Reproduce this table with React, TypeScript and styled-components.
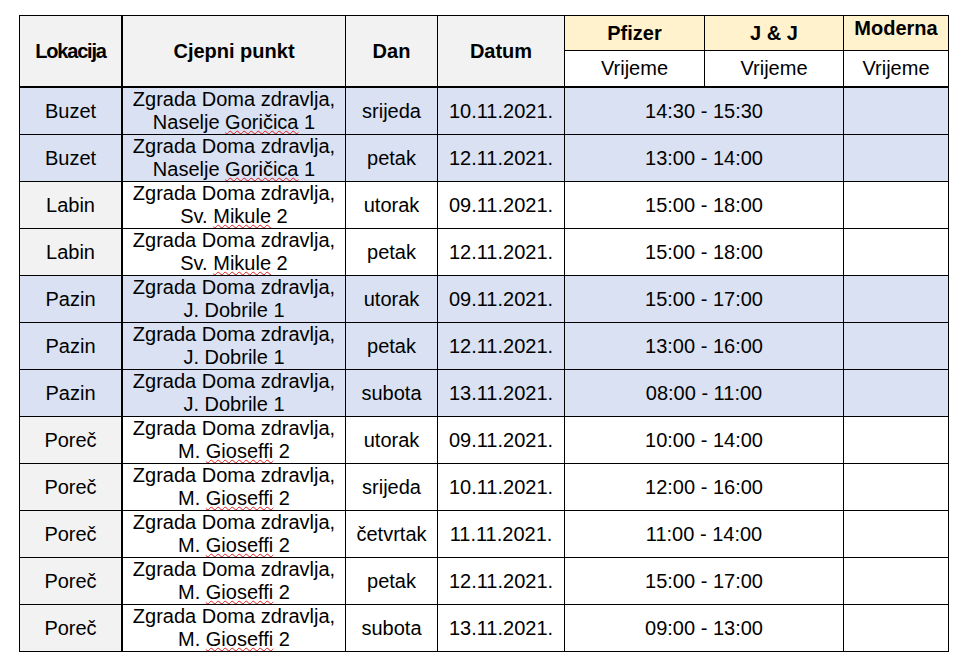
import React from "react";
import styled, { createGlobalStyle } from "styled-components";

const GlobalStyle = createGlobalStyle`
  html, body {
    margin: 0;
    padding: 0;
    background: #ffffff;
  }
  body {
    font-family: "Liberation Sans", Arial, sans-serif;
    color: #000;
  }
`;

const Page = styled.div`
  padding: 15px 0 0 19px;
`;

const Grid = styled.div`
  display: grid;
  grid-template-columns: 103px 223px 92px 127px 140px 139px 105px;
  grid-template-rows: 35px 37px repeat(12, 47px);
  width: max-content;
  border-top: 1px solid #000;
  border-left: 1px solid #000;
`;

type CellProps = {
  $bg?: string;
  $bold?: boolean;
  $thickRight?: boolean;
  $thickBottom?: boolean;
  $rowSpan?: number;
  $colSpan?: number;
  $valign?: "center" | "flex-start";
};

const Cell = styled.div<CellProps>`
  display: flex;
  align-items: ${(p) => p.$valign ?? "center"};
  justify-content: center;
  text-align: center;
  box-sizing: border-box;
  background: ${(p) => p.$bg ?? "#ffffff"};
  border-right: ${(p) => (p.$thickRight ? "2px" : "1px")} solid #000;
  border-bottom: ${(p) => (p.$thickBottom ? "2px" : "1px")} solid #000;
  grid-row: span ${(p) => p.$rowSpan ?? 1};
  grid-column: span ${(p) => p.$colSpan ?? 1};
  font-size: 20px;
  line-height: 23px;
  font-weight: ${(p) => (p.$bold ? 700 : 400)};
  overflow: hidden;
  white-space: nowrap;
`;

const Tight = styled.span`
  letter-spacing: -1.2px;
`;

const Raised = styled.span`
  margin-top: 1px;
`;

const Lines = styled.div`
  display: flex;
  flex-direction: column;
  align-items: center;
`;

const Misspelled = styled.span`
  text-decoration: underline wavy #e01b1b;
  text-decoration-thickness: 1px;
  text-underline-offset: 1px;
`;

const GRAY = "#f2f2f2";
const YELLOW = "#fff2cc";
const BLUE = "#d9e1f2";

type Row = {
  loc: string;
  street: string;
  flagged: string;
  rest: string;
  day: string;
  date: string;
  time: string;
  blue: boolean;
};

const buzet = { loc: "Buzet", street: "Naselje ", flagged: "Goričica", rest: " 1" };
const labin = { loc: "Labin", street: "Sv. ", flagged: "Mikule", rest: " 2" };
const pazin = { loc: "Pazin", street: "J. Dobrile 1", flagged: "", rest: "" };
const porec = { loc: "Poreč", street: "M. ", flagged: "Gioseffi", rest: " 2" };

const rows: Row[] = [
  { ...buzet, day: "srijeda", date: "10.11.2021.", time: "14:30 - 15:30", blue: true },
  { ...buzet, day: "petak", date: "12.11.2021.", time: "13:00 - 14:00", blue: true },
  { ...labin, day: "utorak", date: "09.11.2021.", time: "15:00 - 18:00", blue: false },
  { ...labin, day: "petak", date: "12.11.2021.", time: "15:00 - 18:00", blue: false },
  { ...pazin, day: "utorak", date: "09.11.2021.", time: "15:00 - 17:00", blue: true },
  { ...pazin, day: "petak", date: "12.11.2021.", time: "13:00 - 16:00", blue: true },
  { ...pazin, day: "subota", date: "13.11.2021.", time: "08:00 - 11:00", blue: true },
  { ...porec, day: "utorak", date: "09.11.2021.", time: "10:00 - 14:00", blue: false },
  { ...porec, day: "srijeda", date: "10.11.2021.", time: "12:00 - 16:00", blue: false },
  { ...porec, day: "četvrtak", date: "11.11.2021.", time: "11:00 - 14:00", blue: false },
  { ...porec, day: "petak", date: "12.11.2021.", time: "15:00 - 17:00", blue: false },
  { ...porec, day: "subota", date: "13.11.2021.", time: "09:00 - 13:00", blue: false },
];

export default function App() {
  return (
    <Page>
      <GlobalStyle />
      <Grid>
        <Cell $bg={GRAY} $bold $thickRight $thickBottom $rowSpan={2}>
          <Tight>Lokacija</Tight>
        </Cell>
        <Cell $bg={GRAY} $bold $thickBottom $rowSpan={2}>
          Cjepni punkt
        </Cell>
        <Cell $bg={GRAY} $bold $thickBottom $rowSpan={2}>
          Dan
        </Cell>
        <Cell $bg={GRAY} $bold $thickBottom $rowSpan={2}>
          Datum
        </Cell>
        <Cell $bg={YELLOW} $bold>
          Pfizer
        </Cell>
        <Cell $bg={YELLOW} $bold>
          J &amp; J
        </Cell>
        <Cell $bg={YELLOW} $bold $valign="flex-start">
          <Raised>Moderna</Raised>
        </Cell>
        <Cell $thickBottom>Vrijeme</Cell>
        <Cell $thickBottom>Vrijeme</Cell>
        <Cell $thickBottom>Vrijeme</Cell>

        {rows.map((r, i) => {
          const bg = r.blue ? BLUE : "#ffffff";
          return (
            <React.Fragment key={i}>
              <Cell $bg={r.blue ? BLUE : GRAY} $thickRight>
                {r.loc}
              </Cell>
              <Cell $bg={bg}>
                <Lines>
                  <span>Zgrada Doma zdravlja,</span>
                  <span>
                    {r.street}
                    {r.flagged && <Misspelled>{r.flagged}</Misspelled>}
                    {r.rest}
                  </span>
                </Lines>
              </Cell>
              <Cell $bg={bg}>{r.day}</Cell>
              <Cell $bg={bg}>{r.date}</Cell>
              <Cell $bg={bg} $colSpan={2}>
                {r.time}
              </Cell>
              <Cell $bg={bg} />
            </React.Fragment>
          );
        })}
      </Grid>
    </Page>
  );
}
